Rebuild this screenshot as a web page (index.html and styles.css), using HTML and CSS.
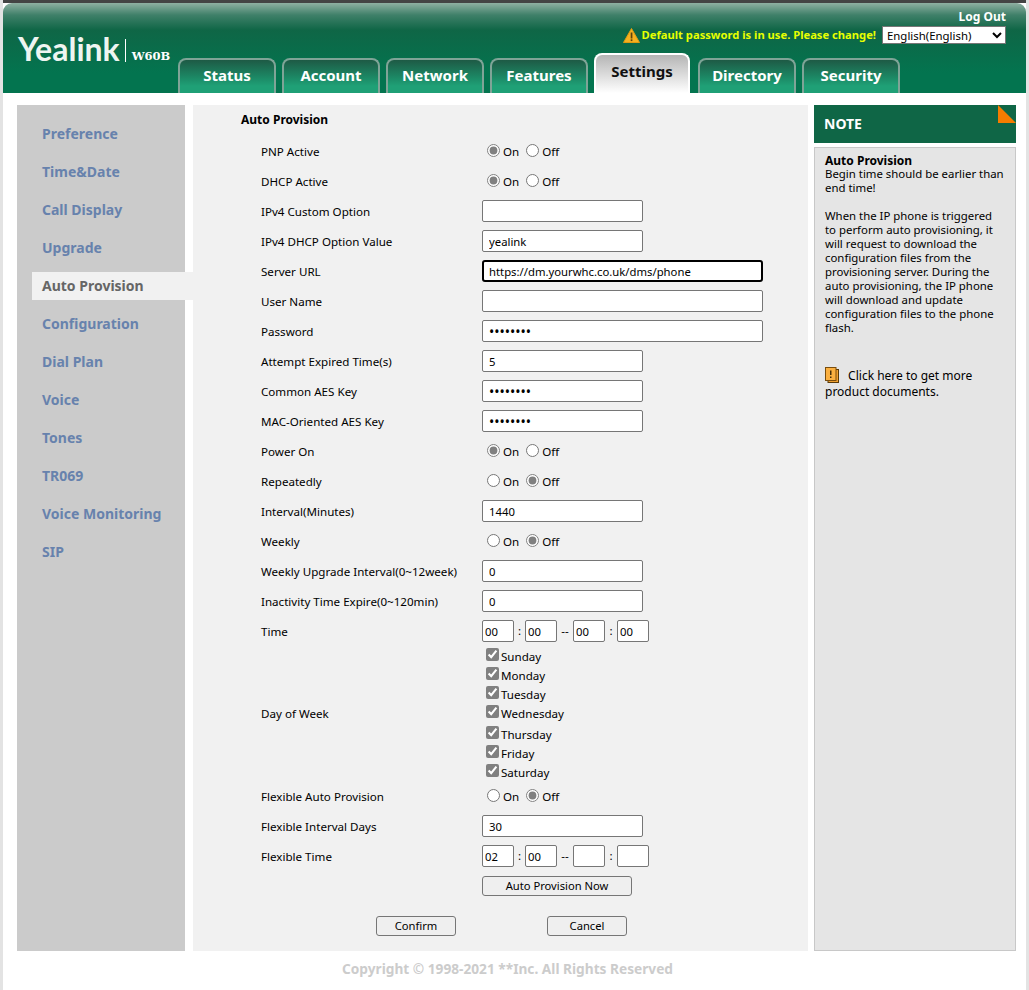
FILE: index.html
```html
<!DOCTYPE html>
<html lang="en">
<head>
  <meta charset="UTF-8" />
  <title>Yealink W60B</title>
  <link rel="stylesheet" href="styles.css">
</head>
<body>
  <div class="page">
    <div class="header">
      <div class="logo">
        <span class="logo-name">Yealink</span>
        <span class="logo-model">W60B</span>
      </div>
      <div class="header-main">
        <div class="logout">Log Out</div>
        <div class="warn-row">
          <svg class="warn-icon" width="17" height="15" viewBox="0 0 17 15">
            <path d="M8.5 .5 L16.5 14.5 H.5 Z" fill="#f5b120" stroke="#e09a10" stroke-linejoin="round"/>
            <rect x="7.7" y="4.5" width="1.7" height="6" fill="#5a4310"/>
            <rect x="7.7" y="11.3" width="1.7" height="1.8" fill="#5a4310"/>
          </svg>
          <span class="warn-text">Default password is in use. Please change!</span>
          <select class="lang"><option>English(English)</option></select>
        </div>
        <div class="tabs">
          <div class="tab">Status</div>
          <div class="tab">Account</div>
          <div class="tab">Network</div>
          <div class="tab">Features</div>
          <div class="tab active">Settings</div>
          <div class="tab">Directory</div>
          <div class="tab">Security</div>
        </div>
      </div>
    </div>

    <div class="main">
      <div class="sidebar">
        <div class="side-item">Preference</div>
        <div class="side-item">Time&amp;Date</div>
        <div class="side-item">Call Display</div>
        <div class="side-item">Upgrade</div>
        <div class="side-item active">Auto Provision</div>
        <div class="side-item">Configuration</div>
        <div class="side-item">Dial Plan</div>
        <div class="side-item">Voice</div>
        <div class="side-item">Tones</div>
        <div class="side-item">TR069</div>
        <div class="side-item">Voice Monitoring</div>
        <div class="side-item">SIP</div>
      </div>

      <div class="content">
        <div class="section-title">Auto Provision</div>

        <div class="row">
          <div class="row-label">PNP Active</div>
          <div class="radios"><input type="radio" name="pnp" checked><span class="opt">On</span><input type="radio" name="pnp"><span>Off</span></div>
        </div>
        <div class="row">
          <div class="row-label">DHCP Active</div>
          <div class="radios"><input type="radio" name="dhcp" checked><span class="opt">On</span><input type="radio" name="dhcp"><span>Off</span></div>
        </div>
        <div class="row">
          <div class="row-label">IPv4 Custom Option</div>
          <input class="text" type="text">
        </div>
        <div class="row">
          <div class="row-label">IPv4 DHCP Option Value</div>
          <input class="text" type="text" value="yealink">
        </div>
        <div class="row">
          <div class="row-label">Server URL</div>
          <input class="text wide focused" type="text" value="https://dm.yourwhc.co.uk/dms/phone">
        </div>
        <div class="row">
          <div class="row-label">User Name</div>
          <input class="text wide" type="text">
        </div>
        <div class="row">
          <div class="row-label">Password</div>
          <input class="text wide" type="password" value="password">
        </div>
        <div class="row">
          <div class="row-label">Attempt Expired Time(s)</div>
          <input class="text" type="text" value="5">
        </div>
        <div class="row">
          <div class="row-label">Common AES Key</div>
          <input class="text" type="password" value="password">
        </div>
        <div class="row">
          <div class="row-label">MAC-Oriented AES Key</div>
          <input class="text" type="password" value="password">
        </div>
        <div class="row">
          <div class="row-label">Power On</div>
          <div class="radios"><input type="radio" name="power" checked><span class="opt">On</span><input type="radio" name="power"><span>Off</span></div>
        </div>
        <div class="row">
          <div class="row-label">Repeatedly</div>
          <div class="radios"><input type="radio" name="repeat"><span class="opt">On</span><input type="radio" name="repeat" checked><span>Off</span></div>
        </div>
        <div class="row">
          <div class="row-label">Interval(Minutes)</div>
          <input class="text" type="text" value="1440">
        </div>
        <div class="row">
          <div class="row-label">Weekly</div>
          <div class="radios"><input type="radio" name="weekly"><span class="opt">On</span><input type="radio" name="weekly" checked><span>Off</span></div>
        </div>
        <div class="row">
          <div class="row-label">Weekly Upgrade Interval(0~12week)</div>
          <input class="text" type="text" value="0">
        </div>
        <div class="row">
          <div class="row-label">Inactivity Time Expire(0~120min)</div>
          <input class="text" type="text" value="0">
        </div>
        <div class="row">
          <div class="row-label">Time</div>
          <div class="time">
            <input class="text small" type="text" value="00"><span class="sep">:</span><input class="text small" type="text" value="00"><span class="sep dash">--</span><input class="text small" type="text" value="00"><span class="sep last">:</span><input class="text small" type="text" value="00">
          </div>
        </div>
        <div class="row days-row">
          <div class="row-label">Day of Week</div>
          <div class="days">
            <div class="day"><input type="checkbox" checked><span>Sunday</span></div>
            <div class="day"><input type="checkbox" checked><span>Monday</span></div>
            <div class="day"><input type="checkbox" checked><span>Tuesday</span></div>
            <div class="day day-gap"><input type="checkbox" checked><span>Wednesday</span></div>
            <div class="day"><input type="checkbox" checked><span>Thursday</span></div>
            <div class="day"><input type="checkbox" checked><span>Friday</span></div>
            <div class="day"><input type="checkbox" checked><span>Saturday</span></div>
          </div>
        </div>
        <div class="row">
          <div class="row-label">Flexible Auto Provision</div>
          <div class="radios"><input type="radio" name="flex"><span class="opt">On</span><input type="radio" name="flex" checked><span>Off</span></div>
        </div>
        <div class="row">
          <div class="row-label">Flexible Interval Days</div>
          <input class="text" type="text" value="30">
        </div>
        <div class="row">
          <div class="row-label">Flexible Time</div>
          <div class="time">
            <input class="text small" type="text" value="02"><span class="sep">:</span><input class="text small" type="text" value="00"><span class="sep dash">--</span><input class="text small" type="text"><span class="sep last">:</span><input class="text small" type="text">
          </div>
        </div>
        <div class="row">
          <div class="row-label"></div>
          <button class="btn now">Auto Provision Now</button>
        </div>
        <div class="actions">
          <button class="btn">Confirm</button>
          <button class="btn">Cancel</button>
        </div>
      </div>

      <div class="note">
        <div class="note-head">NOTE<span class="note-corner"></span></div>
        <div class="note-body">
          <div class="note-title">Auto Provision</div>
          <p>Begin time should be earlier than end time!</p>
          <p>When the IP phone is triggered to perform auto provisioning, it will request to download the configuration files from the provisioning server. During the auto provisioning, the IP phone will download and update configuration files to the phone flash.</p>
          <div class="note-link">
            <svg class="doc-icon" width="14" height="16" viewBox="0 0 14 16">
              <rect x="3" y="2.5" width="10.5" height="13" fill="#f0a030" stroke="#5a3a08"/>
              <rect x=".5" y=".5" width="10.5" height="13" fill="#fbb040" stroke="#7a4d0c"/>
              <rect x="5" y="3.5" width="1.5" height="4.5" fill="#4a3008"/>
              <rect x="5" y="9.5" width="1.5" height="1.5" fill="#4a3008"/>
            </svg>
            Click here to get more product documents.
          </div>
        </div>
      </div>
    </div>

    <div class="footer">Copyright © 1998-2021 **Inc. All Rights Reserved</div>
  </div>
</body>
</html>
```

FILE: styles.css
```css
body {
  margin: 0;
  background: #e3e3e3;
  font-family: "Noto Sans", sans-serif;
  font-size: 11.6px;
  line-height: 14px;
  color: #000;
}

.page {
  height: 987px;
  margin: 0 3px;
  border-top: 3px solid #444;
  background: #fff;
  overflow: hidden;
}

/* header */
.header {
  height: 90px;
  display: flex;
  border-radius: 9px 9px 0 0;
  background: linear-gradient(#8fb0a2 0, #3f8069 12px, #0f6646 27px, #03744f 70px);
}

.logo {
  width: 175px;
  padding: 31px 0 0 15px;
  box-sizing: border-box;
  display: flex;
  align-items: flex-start;
  color: #fff;
}

.logo-name {
  font-family: "Lato", sans-serif;
  font-size: 32px;
  font-weight: bold;
  line-height: 30px;
  color: #eef5f1;
}

.logo-model {
  margin: 5px 0 0 5px;
  padding: 11px 0 0 6px;
  border-left: 1px solid #fff;
  font-family: "DejaVu Serif", serif;
  font-size: 11.5px;
  line-height: 12px;
  font-weight: bold;
}

.header-main {
  flex: 1;
  display: flex;
  flex-direction: column;
}

.logout {
  height: 20px;
  padding: 6px 20px 0 0;
  box-sizing: border-box;
  text-align: right;
  font-size: 12px;
  line-height: 16px;
  font-weight: bold;
  color: #fff;
}

.warn-row {
  display: flex;
  align-items: center;
  justify-content: flex-end;
  height: 24px;
  padding-right: 20px;
}

.warn-icon {
  margin-right: 2px;
}

.warn-text {
  font-size: 11.2px;
  font-weight: bold;
  color: #e6ff00;
  margin-right: 6px;
}

.lang {
  width: 124px;
  height: 18px;
  border: 1px solid #767676;
  background: #fff;
  font-family: "Noto Sans", sans-serif;
  font-size: 11.4px;
  line-height: 14px;
  padding: 0;
}

.tabs {
  margin-top: auto;
  display: flex;
  align-items: flex-end;
  gap: 6px;
}

.tab {
  width: 98px;
  height: 35px;
  box-sizing: border-box;
  border: 2px solid #7fa497;
  border-bottom: 0;
  border-radius: 8px 8px 0 0;
  background: linear-gradient(#1e5a45 0, #1c8a66 18px, #1fa076 26px);
  color: #fff;
  font-size: 15px;
  font-weight: bold;
  text-align: center;
  line-height: 31px;
}

.tab.active {
  width: 96px;
  height: 40px;
  margin-right: 2px;
  border-color: #fff;
  background: linear-gradient(#b5b5b5 0, #fff 38px);
  color: #111;
  line-height: 32px;
}

/* body of the page */
.main {
  display: flex;
  height: 846px;
  margin-top: 12px;
  padding-left: 14px;
}

.sidebar {
  width: 168px;
  background: #cbcbcb;
  padding-top: 15px;
  box-sizing: border-box;
}

.side-item {
  height: 28px;
  margin-bottom: 10px;
  padding-left: 25px;
  line-height: 28px;
  font-size: 14px;
  font-weight: bold;
  color: #6782ad;
}

.side-item.active {
  width: 161px;
  margin-left: 15px;
  padding-left: 10px;
  box-sizing: border-box;
  background: #f1f1f1;
  color: #666;
}

.content {
  width: 615px;
  margin-left: 8px;
  background: #f1f1f1;
}

.section-title {
  height: 31px;
  padding-left: 48px;
  font-size: 12px;
  line-height: 29px;
  font-weight: bold;
}

.row {
  display: flex;
  align-items: center;
  height: 30px;
}

.row-label {
  width: 221px;
  margin: 2px 0 0 68px;
  flex-shrink: 0;
}

.days-row .row-label {
  margin-top: 0;
}

.radios {
  display: flex;
  align-items: center;
}

.radios input {
  margin: 0 3px 2px 5px;
  width: 13px;
  height: 13px;
  accent-color: #808080;
}

.radios span {
  margin-top: 2px;
}

.radios .opt {
  margin-right: 2px;
}

.text {
  width: 161px;
  height: 22px;
  box-sizing: border-box;
  border: 1px solid #767676;
  border-radius: 2px;
  padding: 0 6px;
  background: #fff;
  font-family: "Noto Sans", sans-serif;
  font-size: 11.3px;
}

.text[type="password"] {
  font-size: 14px;
}

.text.wide {
  width: 281px;
}

.text.focused {
  border: 2px solid #000;
  border-radius: 3px;
  padding: 0 5px;
}

.text.small {
  width: 32px;
  padding: 0 2px;
}

.time {
  display: flex;
  align-items: center;
}

.sep {
  width: 11px;
  text-align: center;
}

.sep.dash {
  width: 16px;
}

.sep.last {
  width: 12px;
}

.days-row {
  height: 135px;
}

.days {
  padding-left: 4px;
}

.day {
  display: flex;
  align-items: center;
  height: 19px;
}

.day-gap {
  margin-bottom: 2px;
}

.day input {
  margin: 0 2px 2px 0;
  width: 13px;
  height: 13px;
  accent-color: #808080;
}

.day span {
  margin-top: 2px;
}

.btn {
  height: 20px;
  width: 80px;
  padding: 0 0 2px;
  border: 1px solid #767676;
  border-radius: 3px;
  background: #efefef;
  font-family: "Noto Sans", sans-serif;
  font-size: 11.2px;
  color: #000;
}

.btn.now {
  width: 150px;
}

.actions {
  display: flex;
  gap: 91px;
  padding: 15px 0 0 183px;
}

/* note column */
.note {
  width: 202px;
  margin-left: 6px;
  display: flex;
  flex-direction: column;
  gap: 4px;
}

.note-head {
  height: 38px;
  padding-left: 10px;
  position: relative;
  background: #0f6646;
  color: #fff;
  font-size: 14px;
  font-weight: bold;
  line-height: 38px;
}

.note-corner {
  position: absolute;
  top: 0;
  right: 0;
  width: 0;
  height: 0;
  border-left: 18px solid #f57c00;
  border-top: 18px solid transparent;
}

.note-body {
  flex: 1;
  padding: 6px 11px 6px 10px;
  border: 1px solid #c8c8c8;
  background: #e5e5e5;
  font-size: 11.4px;
  line-height: 14px;
}

.note-title {
  font-size: 12px;
  line-height: 13px;
  font-weight: bold;
}

.note-body p {
  margin: 0 0 14px;
}

.note-link {
  margin-top: 32px;
  font-size: 12px;
  line-height: 16px;
}

.doc-icon {
  margin-right: 6px;
  vertical-align: -3px;
}

.footer {
  margin-top: 9px;
  padding-left: 339px;
  font-size: 13.7px;
  line-height: 18px;
  font-weight: bold;
  color: #ccc;
}
```
